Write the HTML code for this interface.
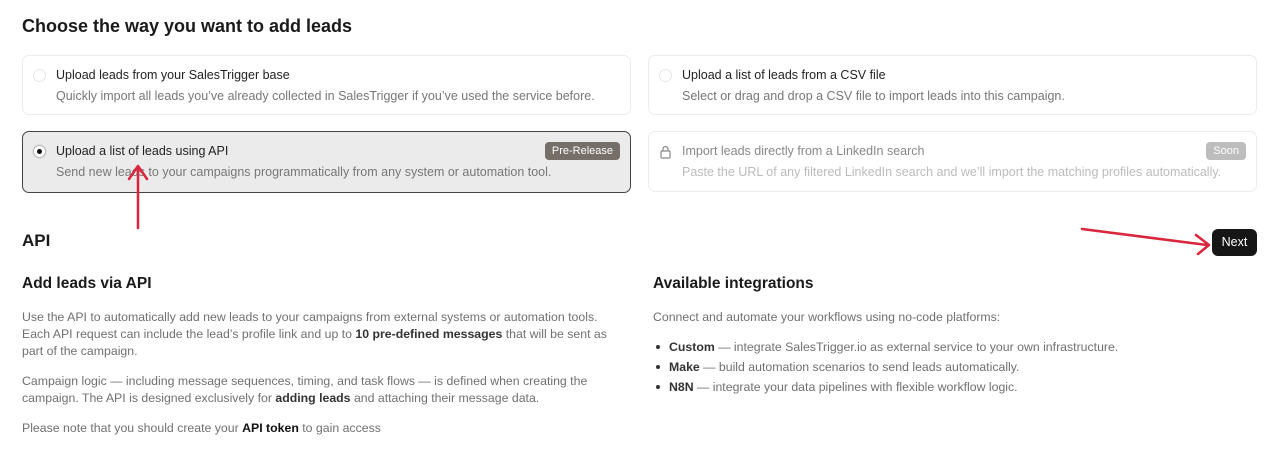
<!DOCTYPE html>
<html><head><meta charset="utf-8"><style>
*{box-sizing:border-box;margin:0;padding:0}
body{width:1280px;height:466px;background:#fff;font-family:"Liberation Sans",sans-serif;color:#1a1a1a;position:relative;overflow:hidden}
.abs{position:absolute}
h1{position:absolute;left:22px;top:16px;font-size:18px;font-weight:bold;color:#1a1a1a}
.card{position:absolute;width:609px;height:60px;border:1px solid #ececec;border-radius:7px;background:#fff}
.card .t{position:absolute;left:33px;top:12px;font-size:12.5px;color:#222}
.card .d{position:absolute;left:33px;top:33px;font-size:12.5px;color:#777}
.radio{position:absolute;left:10px;top:13px;width:13px;height:13px;border-radius:50%;border:1px solid #e6e6e6;background:#fff}
.sel{background:#ebebeb;border:1px solid #444}
.sel .radio{border:1px solid #bbb;background:#fff;box-shadow:0 0 0 1px #ddd}
.sel .radio:after{content:"";position:absolute;left:3px;top:3px;width:5px;height:5px;border-radius:50%;background:#111}
.badge{position:absolute;right:10px;top:10px;height:18px;padding:0 7px;border-radius:4px;font-size:11px;line-height:18px;color:#fff}
.dis .t{color:#888}.dis .d{color:#bbb}
h2{position:absolute;font-size:15.5px;font-weight:bold;color:#1a1a1a}
p{font-size:12.3px;line-height:17px;color:#707070}
p b{color:#333;font-weight:600}
ul{list-style:none}
li{font-size:12.3px;line-height:20px;color:#707070;position:relative;padding-left:16px}
li:before{content:"";position:absolute;left:3px;top:8px;width:4px;height:4px;border-radius:50%;background:#333}
li b{color:#333;font-weight:600}
.next{position:absolute;left:1212px;top:229px;width:45px;height:27px;background:#161616;color:#fff;border-radius:6px;font-size:12.5px;line-height:27px;text-align:center}
</style></head><body>
<h1>Choose the way you want to add leads</h1>

<div class="card" style="left:22px;top:55px">
  <div class="radio"></div>
  <div class="t">Upload leads from your SalesTrigger base</div>
  <div class="d">Quickly import all leads you’ve already collected in SalesTrigger if you’ve used the service before.</div>
</div>
<div class="card" style="left:648px;top:55px">
  <div class="radio"></div>
  <div class="t">Upload a list of leads from a CSV file</div>
  <div class="d">Select or drag and drop a CSV file to import leads into this campaign.</div>
</div>
<div class="card sel" style="left:22px;top:131px;height:62px">
  <div class="radio" style="top:13px"></div>
  <div class="t">Upload a list of leads using API</div>
  <div class="d">Send new leads to your campaigns programmatically from any system or automation tool.</div>
  <div class="badge" style="background:#756e69">Pre-Release</div>
</div>
<div class="card dis" style="left:648px;top:131px;height:61px">
  <svg class="abs" style="left:10px;top:13px" width="13" height="14" viewBox="0 0 13 14"><rect x="2" y="6" width="9" height="7" rx="1" fill="none" stroke="#888" stroke-width="1.2"/><path d="M4 6V4a2.5 2.5 0 0 1 5 0v2" fill="none" stroke="#888" stroke-width="1.2"/></svg>
  <div class="t">Import leads directly from a LinkedIn search</div>
  <div class="d">Paste the URL of any filtered LinkedIn search and we’ll import the matching profiles automatically.</div>
  <div class="badge" style="background:#bdbdbd;right:10px">Soon</div>
</div>

<div class="abs" style="left:22px;top:231px;font-size:17px;font-weight:bold">API</div>
<div class="next">Next</div>

<h2 style="left:22px;top:275px">Add leads via API</h2>
<div class="abs" style="left:22px;top:309px;width:590px">
<p>Use the API to automatically add new leads to your campaigns from external systems or automation tools. Each API request can include the lead’s profile link and up to <b>10 pre-defined messages</b> that will be sent as part of the campaign.</p>
<p style="margin-top:13px">Campaign logic — including message sequences, timing, and task flows — is defined when creating the campaign. The API is designed exclusively for <b>adding leads</b> and attaching their message data.</p>
<p style="margin-top:13px">Please note that you should create your <b style="color:#111">API token</b> to gain access</p>
</div>

<h2 style="left:653px;top:275px">Available integrations</h2>
<p class="abs" style="left:653px;top:309px">Connect and automate your workflows using no-code platforms:</p>
<ul class="abs" style="left:653px;top:337px">
<li><b>Custom</b> — integrate SalesTrigger.io as external service to your own infrastructure.</li>
<li><b>Make</b> — build automation scenarios to send leads automatically.</li>
<li><b>N8N</b> — integrate your data pipelines with flexible workflow logic.</li>
</ul>

<svg class="abs" style="left:0;top:0" width="1280" height="466">
  <g stroke="#d9263c" stroke-width="2.5" fill="none" stroke-linecap="round" stroke-linejoin="round">
    <path d="M138 228V168"/><path d="M129 179L138 166L147 179"/>
    <path d="M1082 229L1207 245"/><path d="M1196 235L1209 245L1198 254"/>
  </g>
</svg>
</body></html>
